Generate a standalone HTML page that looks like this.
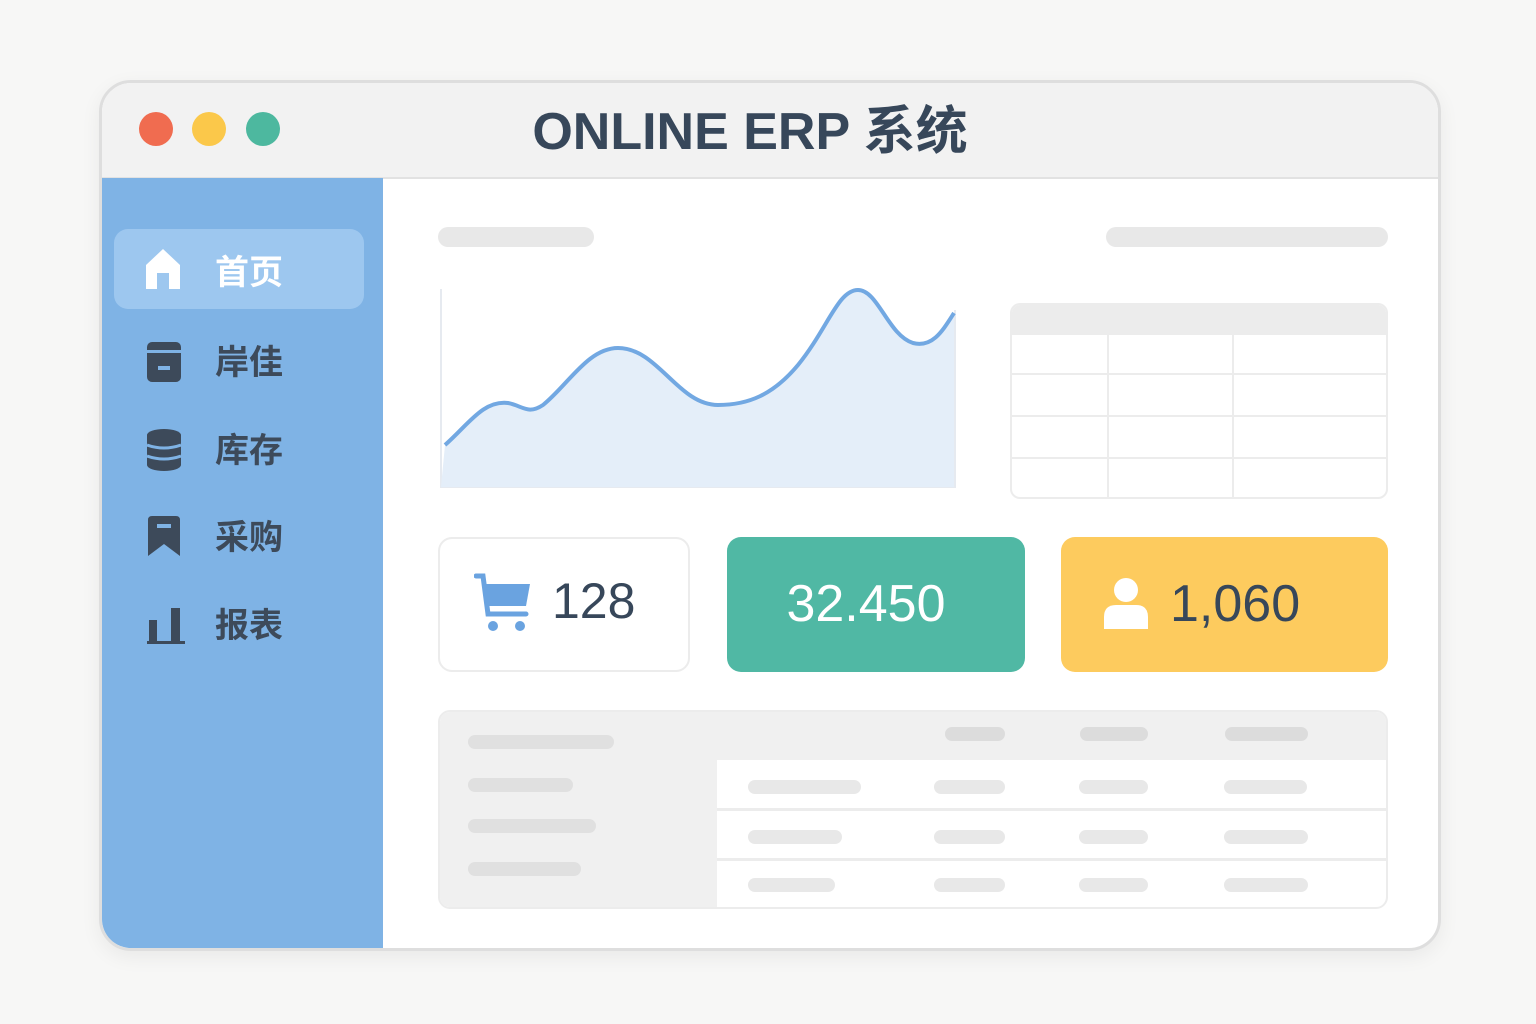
<!DOCTYPE html>
<html><head><meta charset="utf-8"><style>
*{margin:0;padding:0;box-sizing:border-box}
body{width:1536px;height:1024px;background:#f7f7f6;position:relative;font-family:"Liberation Sans","Noto Sans CJK SC",sans-serif;overflow:hidden}
.abs{position:absolute}
.win{left:99px;top:80px;width:1342px;height:871px;border:3px solid #dedede;border-radius:32px;background:#fff;overflow:hidden;box-shadow:0 6px 20px rgba(0,0,0,.06)}
.win>*{margin-top:-3px}
.bar{border-radius:8px;background:#e8e8e8}
.nav{position:absolute;left:45px;font-size:34px;font-weight:bold;color:#3d4a5a}
</style></head><body>
<div class="abs win">
 <div class="abs" style="left:0;top:0;width:1336px;height:99px;background:#f2f2f2;border-bottom:2px solid #e2e2e2"></div>
 <div class="abs" style="left:37px;top:32px;width:34px;height:34px;border-radius:50%;background:#f06c50"></div>
 <div class="abs" style="left:90px;top:32px;width:34px;height:34px;border-radius:50%;background:#fbc84a"></div>
 <div class="abs" style="left:144px;top:32px;width:34px;height:34px;border-radius:50%;background:#4db89f"></div>
 <div class="abs" style="left:0;top:9px;width:1296px;text-align:center;font-size:52px;font-weight:bold;color:#37475a;letter-spacing:0px">ONLINE ERP 系统</div>
 <div class="abs" style="left:0;top:98px;width:281px;height:776px;background:#7fb3e5"></div>
 <div class="abs" style="left:12px;top:149px;width:250px;height:80px;border-radius:14px;background:#9dc7ef"></div>
 <svg class="abs" style="left:42px;top:167px" width="38" height="42" viewBox="0 0 38 42"><path d="M19 2 L36 18 V42 H25 V26 H13 V42 H2 V18 Z" fill="#fff"/></svg>
 <div class="nav" style="left:113px;top:165px;color:#fff">首页</div>
 <svg class="abs" style="left:45px;top:262px" width="34" height="40"><rect width="34" height="40" rx="5" fill="#3d4a5a"/><rect x="0" y="8" width="34" height="3" fill="#7fb3e5"/><rect x="11" y="24" width="12" height="4" fill="#7fb3e5"/></svg>
 <div class="nav" style="left:113px;top:255px">岸佳</div>
 <svg class="abs" style="left:45px;top:349px" width="34" height="42"><ellipse cx="17" cy="6" rx="17" ry="6" fill="#3d4a5a"/><rect y="6" width="34" height="30" fill="#3d4a5a"/><ellipse cx="17" cy="36" rx="17" ry="6" fill="#3d4a5a"/><path d="M0 16 Q17 22 34 16 M0 27 Q17 33 34 27" stroke="#7fb3e5" stroke-width="3" fill="none"/></svg>
 <div class="nav" style="left:113px;top:343px">库存</div>
 <svg class="abs" style="left:46px;top:436px" width="32" height="40"><path d="M4 0 H28 Q32 0 32 4 V40 L16 28 L0 40 V4 Q0 0 4 0Z" fill="#3d4a5a"/><rect x="9" y="8" width="14" height="4" fill="#7fb3e5"/></svg>
 <div class="nav" style="left:113px;top:430px">采购</div>
 <svg class="abs" style="left:45px;top:524px" width="40" height="40"><rect x="2" y="16" width="8" height="22" fill="#3d4a5a"/><rect x="24" y="4" width="9" height="34" fill="#3d4a5a"/><rect x="0" y="37" width="38" height="3" fill="#3d4a5a"/></svg>
 <div class="nav" style="left:113px;top:518px">报表</div>
 <div class="abs bar" style="left:336px;top:147px;width:156px;height:20px;border-radius:10px"></div>
 <div class="abs bar" style="left:1004px;top:147px;width:282px;height:20px;border-radius:10px"></div>
 <svg class="abs" style="left:336px;top:200px" width="520" height="210">
  <path d="M3 9 V207 H517 V30" fill="none" stroke="#e6eaf0" stroke-width="2"/>
  <path d="M7 165 C30 145,45 120,70 123 C85 126,90 135,105 125 C130 105,150 68,180 68 C220 68,240 125,280 125 C310 125,335 115,360 85 C390 48,400 10,420 10 C440 10,450 55,475 63 C495 68,505 50,516 33 V207 H3 Z" fill="#e4eef9"/>
  <path d="M7 165 C30 145,45 120,70 123 C85 126,90 135,105 125 C130 105,150 68,180 68 C220 68,240 125,280 125 C310 125,335 115,360 85 C390 48,400 10,420 10 C440 10,450 55,475 63 C495 68,505 50,516 33" fill="none" stroke="#72a8e2" stroke-width="4"/>
 </svg>
 <div class="abs" style="left:908px;top:223px;width:378px;height:196px;border:2px solid #ececec;border-radius:10px;overflow:hidden">
  <div class="abs" style="left:0;top:0;width:100%;height:30px;background:#ececec"></div>
  <div class="abs" style="left:95px;top:30px;width:2px;height:170px;background:#ececec"></div>
  <div class="abs" style="left:220px;top:30px;width:2px;height:170px;background:#ececec"></div>
  <div class="abs" style="left:0;top:68px;width:100%;height:2px;background:#ececec"></div>
  <div class="abs" style="left:0;top:110px;width:100%;height:2px;background:#ececec"></div>
  <div class="abs" style="left:0;top:152px;width:100%;height:2px;background:#ececec"></div>
 </div>
 <div class="abs" style="left:336px;top:457px;width:252px;height:135px;border:2px solid #ececec;border-radius:14px"></div>
 <svg class="abs" style="left:372px;top:492px" width="60" height="62"><path d="M2 4 H9 L14 42 H52" stroke="#6aa3e0" stroke-width="5" fill="none" stroke-linecap="round"/><path d="M12 12 H56 L52 34 H15 Z" fill="#6aa3e0"/><circle cx="19" cy="54" r="5" fill="#6aa3e0"/><circle cx="46" cy="54" r="5" fill="#6aa3e0"/></svg>
 <div class="abs" style="left:450px;top:492px;font-size:50px;color:#37475a">128</div>
 <div class="abs" style="left:625px;top:457px;width:298px;height:135px;background:#50b8a4;border-radius:14px"></div>
 <div class="abs" style="left:625px;top:494px;width:298px;text-align:center;font-size:52px;color:#fff;padding-right:20px">32.450</div>
 <div class="abs" style="left:959px;top:457px;width:327px;height:135px;background:#fdcb5e;border-radius:14px"></div>
 <svg class="abs" style="left:1002px;top:497px" width="44" height="52"><circle cx="22" cy="13" r="12" fill="#fff"/><path d="M0 52 V40 Q0 28 12 28 H32 Q44 28 44 40 V52Z" fill="#fff"/></svg>
 <div class="abs" style="left:1068px;top:494px;font-size:52px;color:#37475a">1,060</div>
 <div class="abs" style="left:336px;top:630px;width:950px;height:199px;border:2px solid #ececec;border-radius:12px;overflow:hidden;background:#fff">
  <div class="abs" style="left:0;top:0;width:277px;height:199px;background:#f0f0f0"></div>
  <div class="abs" style="left:277px;top:0;width:673px;height:48px;background:#f0f0f0"></div>
  <div class="abs" style="left:277px;top:96px;width:673px;height:3px;background:#ececec"></div>
  <div class="abs" style="left:277px;top:146px;width:673px;height:3px;background:#ececec"></div>
  <div class="abs bar" style="left:28px;top:23px;width:146px;height:14px;background:#e0e0e0"></div>
  <div class="abs bar" style="left:28px;top:66px;width:105px;height:14px;background:#e0e0e0"></div>
  <div class="abs bar" style="left:28px;top:107px;width:128px;height:14px;background:#e0e0e0"></div>
  <div class="abs bar" style="left:28px;top:150px;width:113px;height:14px;background:#e0e0e0"></div>
  <div class="abs bar" style="left:505px;top:15px;width:60px;height:14px;background:#dcdcdc"></div>
  <div class="abs bar" style="left:640px;top:15px;width:68px;height:14px;background:#dcdcdc"></div>
  <div class="abs bar" style="left:785px;top:15px;width:83px;height:14px;background:#dcdcdc"></div>
  <div class="abs bar" style="left:308px;top:68px;width:113px;height:14px"></div>
  <div class="abs bar" style="left:494px;top:68px;width:71px;height:14px"></div>
  <div class="abs bar" style="left:639px;top:68px;width:69px;height:14px"></div>
  <div class="abs bar" style="left:784px;top:68px;width:83px;height:14px"></div>
  <div class="abs bar" style="left:308px;top:118px;width:94px;height:14px"></div>
  <div class="abs bar" style="left:494px;top:118px;width:71px;height:14px"></div>
  <div class="abs bar" style="left:639px;top:118px;width:69px;height:14px"></div>
  <div class="abs bar" style="left:784px;top:118px;width:84px;height:14px"></div>
  <div class="abs bar" style="left:308px;top:166px;width:87px;height:14px"></div>
  <div class="abs bar" style="left:494px;top:166px;width:71px;height:14px"></div>
  <div class="abs bar" style="left:639px;top:166px;width:69px;height:14px"></div>
  <div class="abs bar" style="left:784px;top:166px;width:84px;height:14px"></div>
 </div>
</div>
</body></html>
